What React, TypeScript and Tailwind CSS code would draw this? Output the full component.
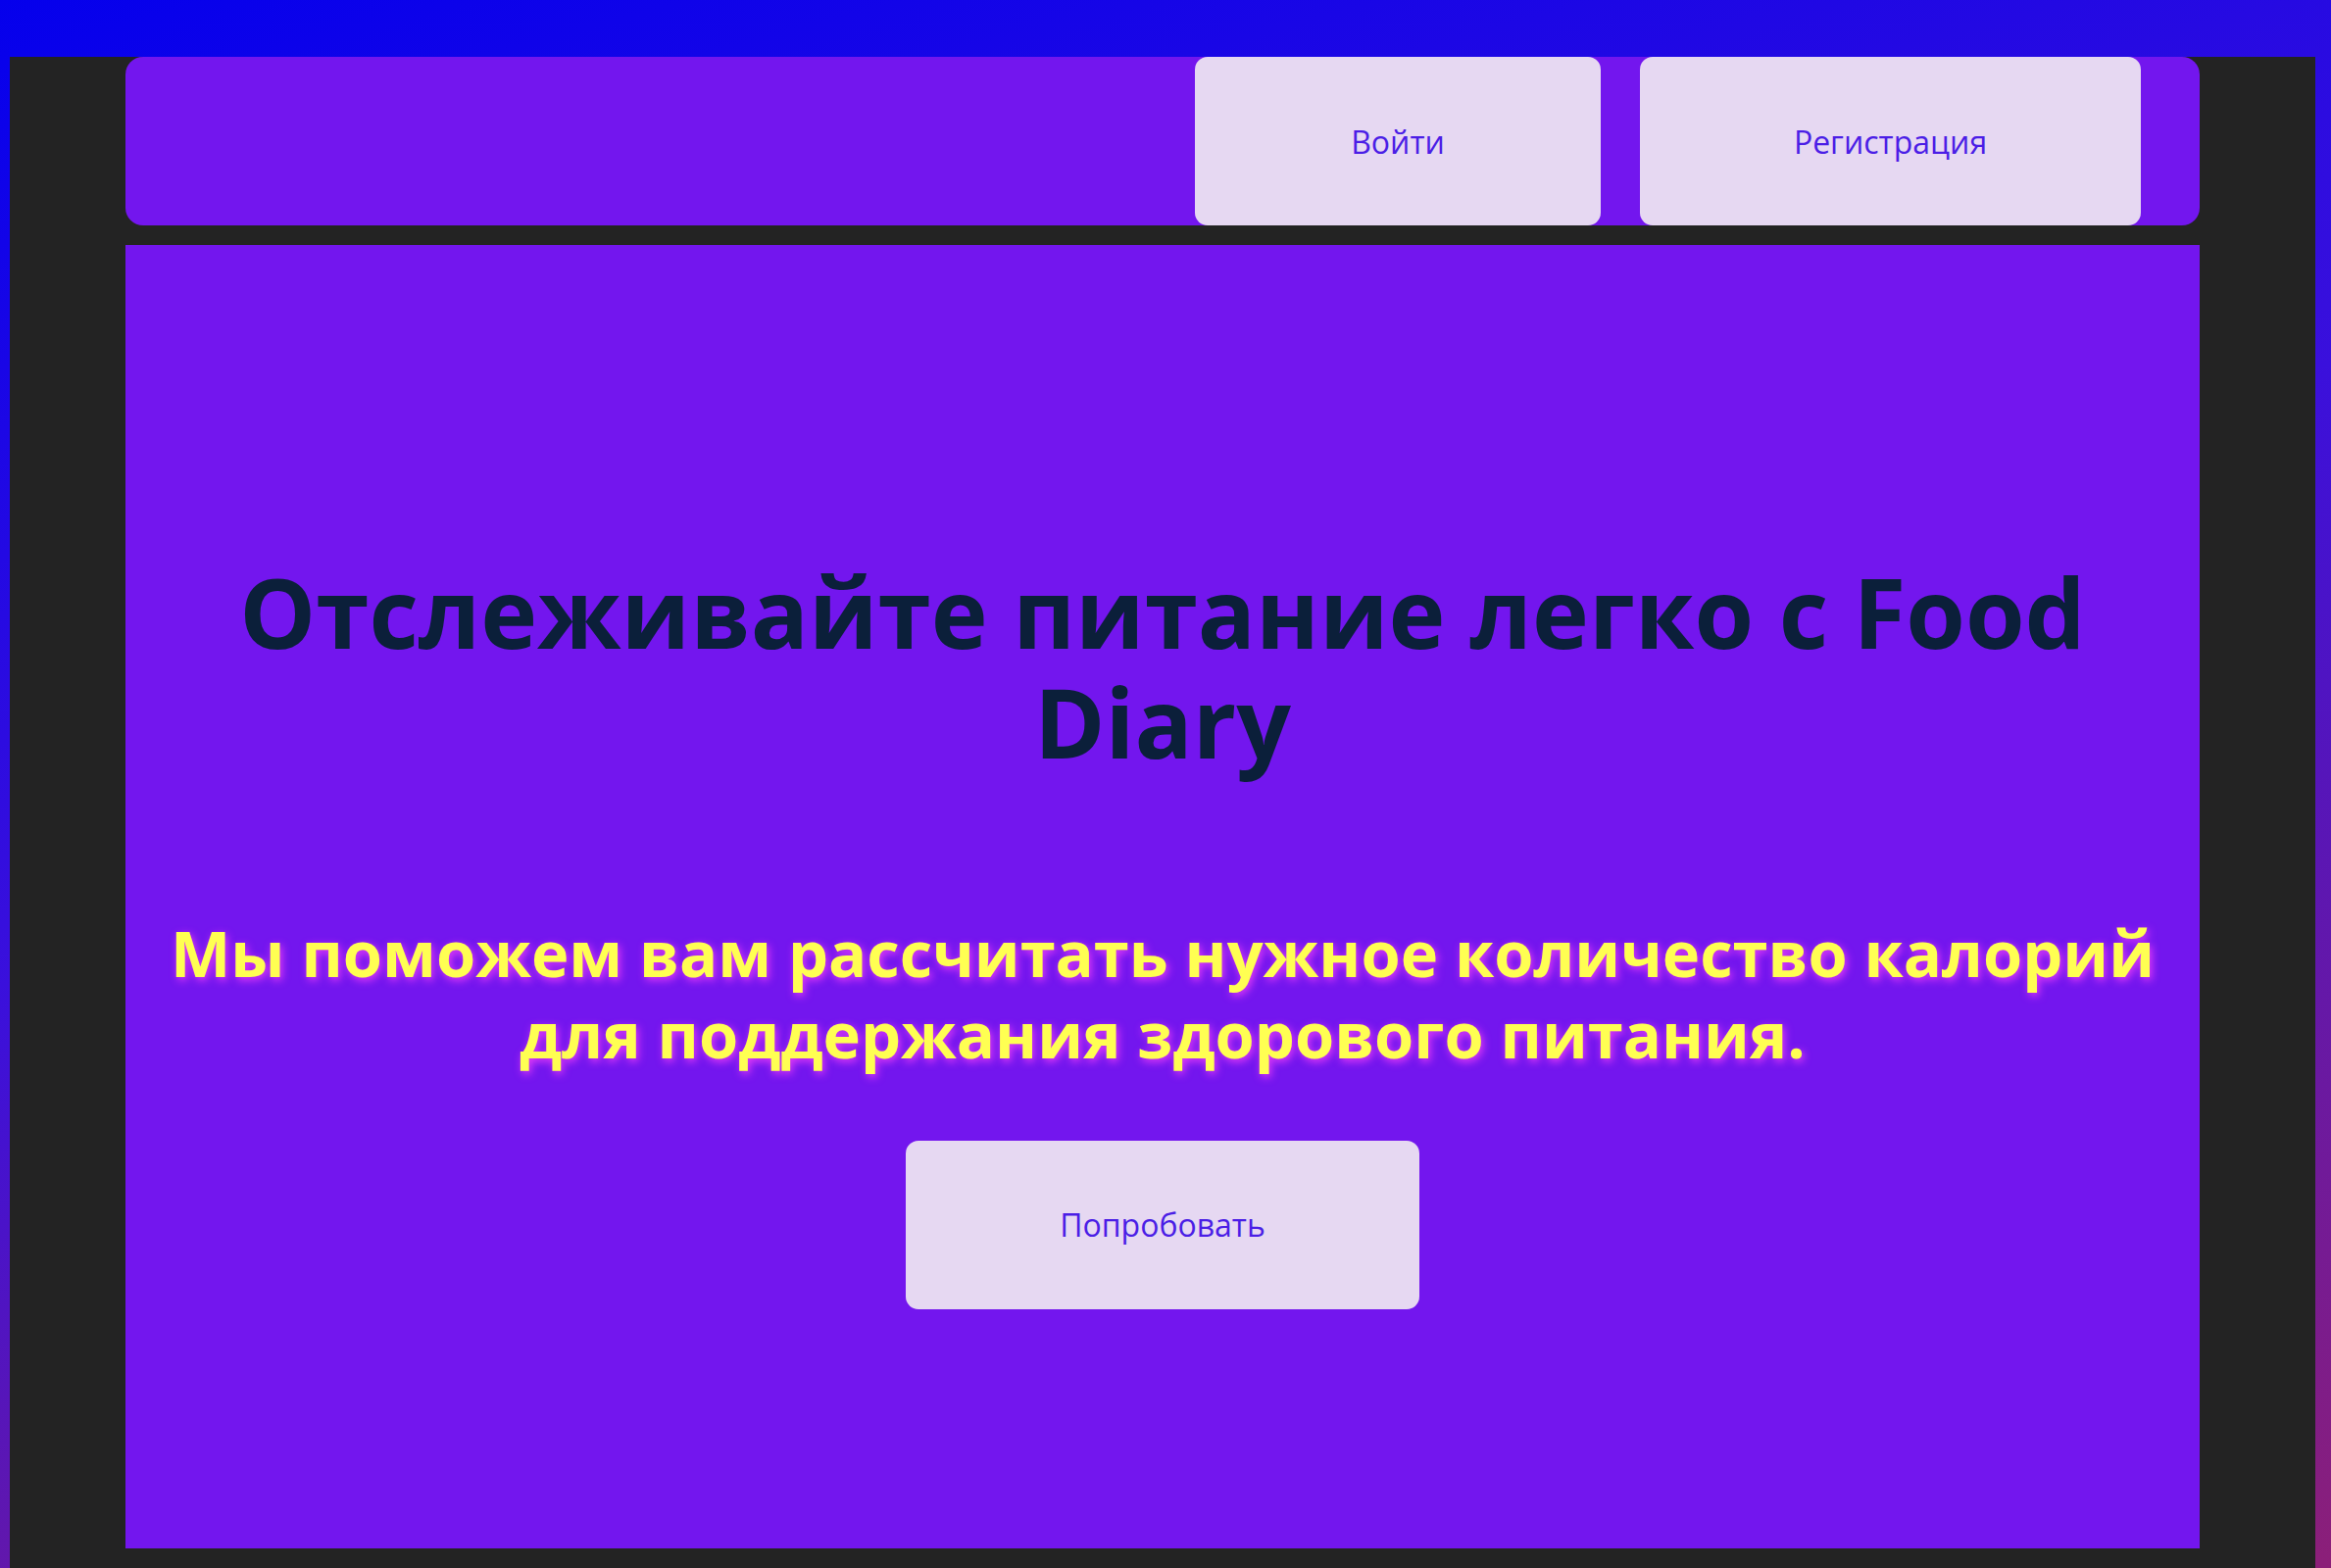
import React from "react";

const font = "font-['Open_Sans','Noto_Sans',sans-serif]";

const NavButton: React.FC<{ label: string; width: string }> = ({ label, width }) => (
  <button
    className={`${width} h-full rounded-[13px] bg-[#e6d8f2] text-[#4b1ee6] text-[32px] pt-[2px] ${font} flex items-center justify-center`}
  >
    {label}
  </button>
);

const App: React.FC = () => {
  return (
    <div className="min-h-screen w-full bg-[linear-gradient(165deg,#0500ec_0%,#3a10dc_45%,#8c1f78_100%)] pt-[58px] pl-[10px] pr-[16px]">
      <div className="bg-[#232323] px-[118px] pb-[20px] flex flex-col gap-[20px]">
        <header className="h-[172px] rounded-[18px] bg-[#7316ee] flex justify-end gap-[40px] pr-[60px]">
          <NavButton label="Войти" width="w-[414px]" />
          <NavButton label="Регистрация" width="w-[511px]" />
        </header>

        <main className="h-[1330px] bg-[#7316ee] flex flex-col items-center pt-[318px] text-center">
          <h1 className={`text-[98px] leading-[112px] font-bold text-[#0b1f3a] ${font}`}>
            Отслеживайте питание легко с Food Diary
          </h1>
          <p
            className={`mt-[139px] px-[20px] text-[65px] leading-[83px] font-bold text-[#ffff52] ${font} [text-shadow:2px_3px_8px_#e53cf7]`}
          >
            Мы поможем вам рассчитать нужное количество калорий для поддержания здорового питания.
          </p>
          <button
            className={`mt-[67px] w-[524px] h-[172px] rounded-[13px] bg-[#e6d8f2] text-[#4b1ee6] text-[32px] ${font} flex items-center justify-center`}
          >
            Попробовать
          </button>
        </main>
      </div>
    </div>
  );
};

export default App;
